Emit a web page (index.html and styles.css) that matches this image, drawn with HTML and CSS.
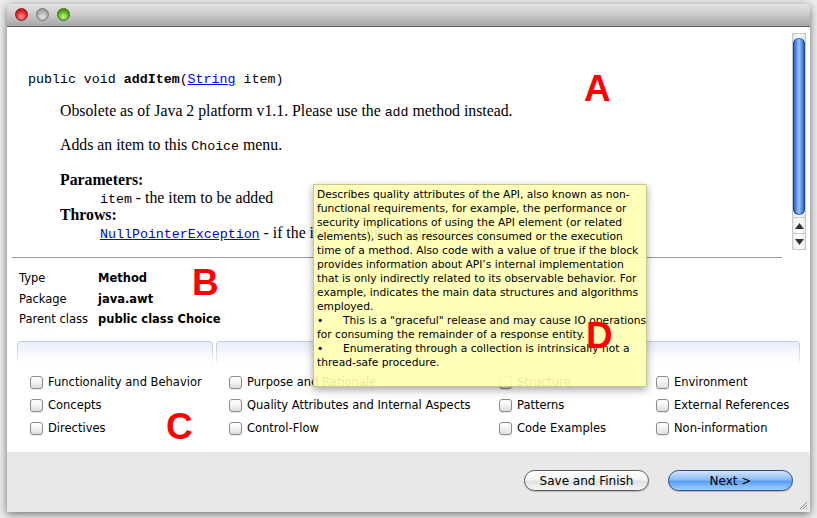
FILE: index.html
```html
<!DOCTYPE html>
<html>
<head>
<meta charset="utf-8">
<link rel="stylesheet" href="styles.css">
</head>
<body>
<div class="window">
  <div class="titlebar">
    <span class="light red"></span>
    <span class="light grey"></span>
    <span class="light green"></span>
  </div>
  <div class="content">
    <div class="pane">
      <div class="doc">
        <div class="sig">public void <b>addItem</b>(<a href="#">String</a> item)</div>
        <div class="para first">Obsolete as of Java 2 platform v1.1. Please use the <code>add</code> method instead.</div>
        <div class="para second">Adds an item to this <code>Choice</code> menu.</div>
        <div class="dt params">Parameters:</div>
        <div class="dd"><code>item</code> - the item to be added</div>
        <div class="dt">Throws:</div>
        <div class="dd npe"><a href="#"><code>NullPointerException</code></a> - if the item's value is equal to <code>null</code>.</div>
      </div>
      <div class="vscroll">
        <div class="thumb"></div>
        <div class="arrow up"><svg width="9" height="6" viewBox="0 0 9 6"><path d="M4.5 0 L9 6 L0 6 Z" fill="#333"/></svg></div>
        <div class="arrow down"><svg width="9" height="6" viewBox="0 0 9 6"><path d="M0 0 L9 0 L4.5 6 Z" fill="#333"/></svg></div>
      </div>
    </div>
    <div class="sep"></div>
    <div class="info">
      <span class="lbl">Type</span><span class="val">Method</span>
      <span class="lbl">Package</span><span class="val">java.awt</span>
      <span class="lbl">Parent class</span><span class="val">public class Choice</span>
    </div>
    <div class="tabs">
      <div class="tab t1"></div>
      <div class="tab t2"></div>
    </div>
    <div class="checks">
      <label class="chk"><span class="box"></span>Functionality and Behavior</label>
      <label class="chk"><span class="box"></span>Purpose and Rationale</label>
      <label class="chk"><span class="box"></span>Structure</label>
      <label class="chk"><span class="box"></span>Environment</label>
      <label class="chk"><span class="box"></span>Concepts</label>
      <label class="chk"><span class="box"></span>Quality Attributes and Internal Aspects</label>
      <label class="chk"><span class="box"></span>Patterns</label>
      <label class="chk"><span class="box"></span>External References</label>
      <label class="chk"><span class="box"></span>Directives</label>
      <label class="chk"><span class="box"></span>Control-Flow</label>
      <label class="chk"><span class="box"></span>Code Examples</label>
      <label class="chk"><span class="box"></span>Non-information</label>
    </div>
  </div>
  <div class="bottombar">
    <button class="btn">Save and Finish</button>
    <button class="btn primary">Next &gt;</button>
    <svg class="grip" width="10" height="10" viewBox="0 0 10 10"><path d="M9 2 L2 9 M9 5 L5 9 M9 8 L8 9" stroke="#8a8a8a" stroke-width="1"/></svg>
  </div>

  <div class="tooltip">
    <div>Describes quality attributes of the API, also known as non-</div>
    <div>functional requirements, for example, the performance or</div>
    <div>security implications of using the API element (or related</div>
    <div>elements), such as resources consumed or the execution</div>
    <div>time of a method. Also code with a value of true if the block</div>
    <div>provides information about API’s internal implementation</div>
    <div>that is only indirectly related to its observable behavior. For</div>
    <div>example, indicates the main data structures and algorithms</div>
    <div>employed.</div>
    <div><span class="bullet">•</span>This is a "graceful" release and may cause IO operations</div>
    <div>for consuming the remainder of a response entity.</div>
    <div><span class="bullet">•</span>Enumerating through a collection is intrinsically not a</div>
    <div>thread-safe procedure.</div>
  </div>

  <span class="mark mA">A</span>
  <span class="mark mB">B</span>
  <span class="mark mC">C</span>
  <span class="mark mD">D</span>
</div>
</body>
</html>
```

FILE: styles.css
```css
html, body {
  margin: 0;
  padding: 0;
}
body {
  width: 817px;
  height: 518px;
  background: #ececec;
  overflow: hidden;
  font-family: "DejaVu Sans", sans-serif;
}
.window {
  position: relative;
  margin: 4px 0 0 7px;
  width: 803px;
  height: 508px;
  display: flex;
  flex-direction: column;
  background: #fff;
  border-radius: 5px 5px 0 0;
  box-shadow: 0 2px 9px rgba(0,0,0,0.55);
}
.titlebar {
  height: 23px;
  box-sizing: border-box;
  border-bottom: 1px solid #5e5e5e;
  border-radius: 5px 5px 0 0;
  background: linear-gradient(#e4e4e4, #c9c9c9 50%, #a6a6a6);
  display: flex;
  align-items: center;
  gap: 8px;
  padding-left: 8px;
  padding-bottom: 1px;
}
.light {
  width: 13px;
  height: 13px;
  border-radius: 50%;
  box-sizing: border-box;
}
.light.red {
  background: radial-gradient(circle at 50% 70%, #ff9a9a, #e0242a 55%, #9c0a10);
  border: 1px solid #8d1a1a;
}
.light.grey {
  background: radial-gradient(circle at 50% 70%, #e4e4e4, #adadad 55%, #888);
  border: 1px solid #7a7a7a;
}
.light.green {
  background: radial-gradient(circle at 50% 70%, #c6f49a, #5aae1e 55%, #2f6f0b);
  border: 1px solid #3a6e1a;
}
.content {
  flex: 1;
  display: flex;
  flex-direction: column;
  background: #fff;
}
.pane {
  height: 230px;
  display: flex;
}
.doc {
  flex: 1;
  padding: 45px 0 0 21px;
  font-family: "Liberation Serif", serif;
  font-size: 15.8px;
  color: #000;
  white-space: nowrap;
  overflow: hidden;
}
.doc code, .sig {
  font-family: "Liberation Mono", monospace;
  font-size: 13.3px;
  line-height: 1;
}
.doc a {
  color: #0000ee;
}
.sig {
  height: 16px;
  line-height: 16px;
}
.para {
  height: 18px;
  line-height: 18px;
  padding-left: 32px;
}
.para.first { margin-top: 14px; }
.para.second { margin-top: 16px; }
.dt {
  font-weight: bold;
  height: 18px;
  line-height: 18px;
  padding-left: 32px;
}
.dt.params { margin-top: 17px; }
.dd {
  height: 17px;
  line-height: 18px;
  padding-left: 72px;
}
.vscroll {
  width: 14px;
  height: 217px;
  margin: 6px 4px 0 0;
  box-sizing: border-box;
  border: 1px solid #c8c8c8;
  background: linear-gradient(90deg, #e6e6e6, #fafafa 50%, #e6e6e6);
  display: flex;
  flex-direction: column;
}
.thumb {
  margin: 4px 0 0 0;
  height: 177px;
  border-radius: 6px;
  background: linear-gradient(90deg, #1d4fb8, #4f8ce8 25%, #9ec6f8 50%, #4f8ce8 75%, #1d4fb8);
  box-shadow: inset 0 0 0 1px rgba(20,50,130,0.6);
}
.arrow {
  height: 15px;
  display: flex;
  align-items: center;
  justify-content: center;
  border-top: 1px solid #c8c8c8;
  background: linear-gradient(90deg, #ececec, #fff, #ececec);
}
.arrow.up { margin-top: 2px; }
.sep {
  height: 1px;
  margin: 0 28px 0 5px;
  background: #9a9a9a;
}
.info {
  display: grid;
  grid-template-columns: 79px auto;
  padding: 10px 0 0 12px;
  font-size: 11.5px;
  line-height: 20.5px;
  color: #000;
}
.val { font-weight: bold; }
.tabs {
  display: flex;
  gap: 3px;
  margin: 11px 10px 0 10px;
  height: 24px;
}
.tab {
  box-sizing: border-box;
  border: 1px solid #c4cceb;
  border-bottom: none;
  border-radius: 3px 3px 0 0;
  background: linear-gradient(#e8edfa, #fff);
  -webkit-mask-image: linear-gradient(#000 30%, transparent);
  mask-image: linear-gradient(#000 30%, transparent);
}
.t1 { width: 196px; }
.t2 { flex: 1; }
.checks {
  display: grid;
  grid-template-columns: 199px 270px 157px auto;
  grid-auto-rows: 23px;
  margin-top: 6px;
  padding-left: 23px;
  font-size: 11.5px;
  color: #000;
}
.chk {
  display: flex;
  align-items: center;
  gap: 5px;
  white-space: nowrap;
}
.box {
  width: 13px;
  height: 13px;
  box-sizing: border-box;
  border: 1px solid #8c8c8c;
  border-radius: 3px;
  background: linear-gradient(#fff, #f2f2f2 50%, #dcdcdc);
  box-shadow: 0 1px 1px rgba(0,0,0,0.1);
  flex: none;
}
.bottombar {
  position: relative;
  height: 60px;
  background: #e8e8e8;
  display: flex;
  justify-content: flex-end;
  align-items: flex-start;
  gap: 19px;
  padding: 18px 17px 0 0;
  box-sizing: border-box;
}
.btn {
  width: 125px;
  height: 21px;
  border-radius: 11px;
  border: 1px solid #5b5b5b;
  font-family: "DejaVu Sans", sans-serif;
  font-size: 12px;
  color: #000;
  padding: 0;
  background: linear-gradient(#ffffff, #f4f4f4 45%, #e2e2e2 55%, #f6f6f6);
  box-shadow: 0 1px 1px rgba(0,0,0,0.2);
}
.btn.primary {
  border-color: #2a4b8f;
  background: linear-gradient(#d3e6fc, #8dbcf4 45%, #5b9ef0 55%, #9fd0fb);
}
.grip {
  position: absolute;
  right: 2px;
  bottom: 2px;
}
.tooltip {
  position: absolute;
  left: 306px;
  top: 180px;
  width: 334px;
  height: 203px;
  box-sizing: border-box;
  padding: 3px 0 0 3px;
  background: rgba(255, 255, 178, 0.9);
  border: 1px solid rgba(0,0,0,0.22);
  box-shadow: 0 3px 8px rgba(0,0,0,0.35);
  font-size: 10.7px;
  line-height: 14px;
  color: #000;
  white-space: nowrap;
}
.bullet {
  display: inline-block;
  width: 26px;
}
.mark {
  position: absolute;
  font-family: "Liberation Sans", sans-serif;
  font-weight: bold;
  font-size: 37px;
  line-height: 36px;
  color: #ff0000;
}
.mA { left: 577px; top: 67px; }
.mB { left: 185px; top: 261px; }
.mC { left: 159px; top: 405px; }
.mD { left: 579px; top: 314px; }
```
